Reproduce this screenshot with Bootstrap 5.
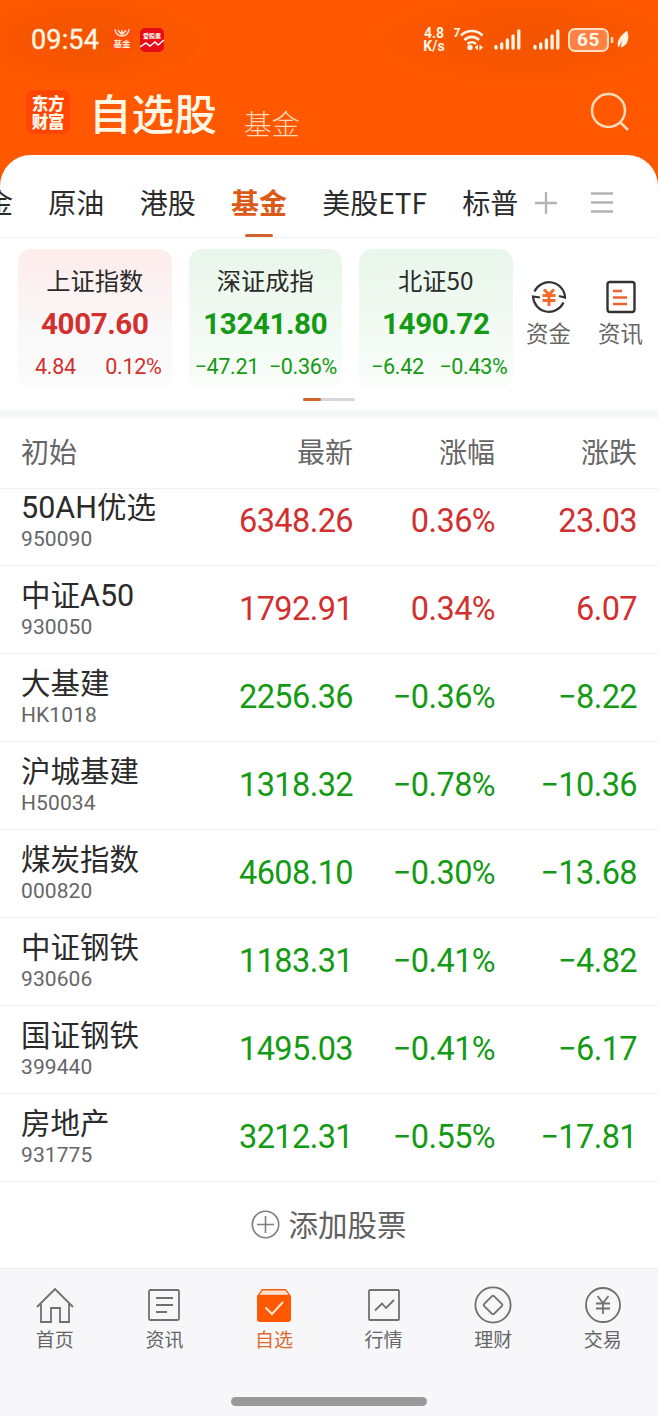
<!DOCTYPE html>
<html lang="zh-CN">
<head>
<meta charset="utf-8">
<meta name="viewport" content="width=device-width, initial-scale=1">
<title>自选股</title>
<link href="https://cdn.jsdelivr.net/npm/bootstrap@5.3.0/dist/css/bootstrap.min.css" rel="stylesheet">
<style>
:root{--cjk:"Noto Sans CJK SC",sans-serif;--num:Roboto,"Noto Sans CJK SC",sans-serif;--brand:#ff5800;--up:#d2302e;--down:#149a14}
body{font-family:var(--cjk);background:#fff;color:#2b2b2b;width:658px;height:1416px;overflow:hidden;line-height:1}
svg{display:block;flex:none}
.up{color:var(--up)}.down{color:var(--down)}
.top{background:radial-gradient(ellipse 130px 50px at 85px 40px,#0000000d,transparent),radial-gradient(ellipse 160px 50px at 525px 40px,#0000000d,transparent),var(--brand);height:186px;color:#fff6e6}
.status{height:80px;padding-left:31px;padding-right:29px}
.clock{font:400 27px/30px var(--num);letter-spacing:.15px;width:79px;-webkit-text-stroke:.4px}
.app-fund,.app-stock{width:24px;height:24px;border-radius:5px;overflow:hidden}
.app-fund{background:#ff4d0a}.app-stock{background:#e60c18}
.speed{font:700 14px/13px Roboto;width:24px}
.batt{width:41px;height:24px;border:2px solid #ffe0c4;border-radius:7px;background:#ff8145;font:700 19px/20px Roboto;letter-spacing:.6px}
.titles{height:75px;padding:0 28px 0 26px}
.logo{width:44px;height:44px;border-radius:8px;background:#ff4503;font:900 16.5px/18px var(--cjk);padding-top:4px;letter-spacing:-.2px}
.title{font-size:42.6px;font-weight:500;line-height:44px}
.subtitle{font-size:28px;font-weight:300;line-height:30px;color:#ffd9ba}
.sheet{margin-top:-31px;border-radius:31px 31px 0 0;background:#fff;position:relative}
.tabs{height:83px;border-bottom:1px solid #f0f1f3}
.tabs-in{width:530px;overflow:hidden;height:83px}
.tab{font-size:28px;line-height:32px;padding-top:31px;height:83px;margin-right:35.3px;white-space:nowrap;flex:none}
.tab:first-child{margin-left:-15px}
.tab.on{color:#dc5a18;font-weight:700}
.tab.on::after{content:"";display:block;width:28px;height:3px;border-radius:2px;background:#d3622b;margin:16px auto 0}
.indices{height:172px;padding:11px 0 0 18px}
.idx{width:153.5px;height:139px;border-radius:13px;margin-right:17px;text-align:center;flex:none}
.idx.r{background:linear-gradient(#feecec,#f9f8f9 60%,#fbfbfc)}
.idx.g{background:linear-gradient(#e9f6ea,#f9fdf9)}
.idx-name{font-size:24.3px;line-height:28px;padding-top:17px}
.idx-val{font:700 29.5px/34px Roboto;margin-top:13px;letter-spacing:-.4px}
.idx-chg{font:400 21.6px/26px Roboto;margin-top:13px;display:flex;justify-content:space-between;letter-spacing:-.35px}
.quick{font-size:22.4px;line-height:26px;color:#666;width:72px;padding-top:30px}
.quick svg{margin:0 auto 4px}
.pager{width:52px;height:3px;background:#d6d6da;border-radius:2px;margin:-12px 0 9px 303px}
.pager i{display:block;width:18px;height:3px;background:#d3622b;border-radius:2px}
.band{height:8px;background:#f6f7f9}
.cols{display:grid;grid-template-columns:182px 150px 142px 142px;padding:0 21px;align-items:center;border-bottom:1px solid #f0f0f1}
.cols>*{text-align:right}.cols>:first-child{text-align:left}
.thead-q{height:71px;font-size:28px;line-height:30px;color:#666;padding-bottom:4px}
.quote{height:88px;font:400 32.5px/38px var(--num);letter-spacing:-.6px}
.quote.first{height:77px}
.quote.first>*{margin-top:-11px}
.quote>span{padding-bottom:1px}
.nm{font:400 29.5px/34px var(--num);letter-spacing:0;color:#2b2b2b;padding-bottom:2px}
.nm b{display:block;font:400 21px/24px Roboto;color:#666;margin-top:2px;letter-spacing:.1px}
.latin{font-size:30.5px;line-height:1}
.add{height:86px;font-size:29.5px;color:#606060;padding-bottom:2px}
.bar{height:148px;background:#f7f7fa;border-top:1px solid #ebebee}
.bar-item{width:109.6px;padding-top:17px;font-size:19px;line-height:24px;color:#666;text-align:center}
.bar-item svg{margin:0 auto 3px}
.bar-item.on{color:#e06a30}
.homeline{width:196px;height:9px;border-radius:5px;background:#999;margin:46px auto 0}
</style>
</head>
<body>
<header class="top">
  <div class="status d-flex align-items-center">
    <span class="clock">09:54</span>
    <span class="app-fund"><svg width="24" height="24" viewBox="0 0 24 24"><path d="M5 1a7 7 0 0 0 14 0M8 2l3 4 1-3 1 3 3-4" fill="none" stroke="#ffe9d4" stroke-width="1.3"/><text x="12" y="19" font-size="8.5" font-weight="700" text-anchor="middle" fill="#fff0e0">基金</text></svg></span>
    <span class="app-stock" style="margin-left:6px"><svg width="24" height="24" viewBox="0 0 24 24"><text x="12" y="10" font-size="6" font-weight="900" text-anchor="middle" fill="#ffe9e0">爱股票</text><path d="M0 19l6-4 4 3 5-4 3 3 6-5" fill="none" stroke="#fff" stroke-width="1.5"/></svg></span>
    <span class="speed ms-auto text-center">4.8<br>K/s</span>
    <svg width="31" height="26" viewBox="0 0 31 26" style="margin-left:8px" fill="none" stroke="#fff3e2" stroke-width="2.6"><text x="-1" y="10" font-family="Roboto" font-size="13" font-weight="700" fill="#fff3e2" stroke="none">7</text><path d="M7 8.500a15 15 0 0 1 21.500 0M10.500 13a10 10 0 0 1 14.500 0M13.500 17a6 6 0 0 1 8.500 0"/><circle cx="16" cy="20.500" r="2.700" fill="#fff3e2" stroke="none"/><path d="M24 17.500v6l-3.500-3zM25.500 17.500v6l3.500-3z" fill="#fff3e2" stroke="none"/></svg>
    <svg width="27" height="22" viewBox="0 0 27 22" style="margin-left:9px" stroke="#fff3e2" stroke-width="3.300" stroke-linecap="round"><path d="M2 17.500v1.500M7.700 15v4M13.400 11v8M19.100 7v12M24.800 2v17"/></svg>
    <svg width="27" height="22" viewBox="0 0 27 22" style="margin-left:12px" stroke="#fff3e2" stroke-width="3.300" stroke-linecap="round"><path d="M2 17.500v1.500M7.700 15v4M13.400 11v8M19.100 7v12M24.800 2v17"/></svg>
    <span class="batt text-center" style="margin-left:8px">65</span>
    <svg width="20" height="20" viewBox="0 0 20 20"><path d="M3 7v6" stroke="#ffe0c4" stroke-width="2.500"/><path d="M18 1c3 9-1 15-6 16l2-8-4.500 8c-2-6 2-11 8.500-16z" fill="#fff3e2" stroke="#fff3e2" stroke-width=".6"/></svg>
  </div>
  <div class="titles d-flex">
    <div class="logo text-center" style="margin-top:10px">东方<br>财富</div>
    <div class="title" style="margin:10px 0 0 19px">自选股</div>
    <div class="subtitle" style="margin:28px 0 0 27px">基金</div>
    <svg class="ms-auto" style="margin-top:12px" width="40" height="40" viewBox="0 0 40 40" fill="none" stroke="#ffdcbc" stroke-width="2.500"><circle cx="18.500" cy="18.500" r="16.500"/><path d="M30 30l8 8"/></svg>
  </div>
</header>
<main class="sheet">
  <nav class="tabs d-flex">
    <div class="tabs-in d-flex">
      <span class="tab">金</span><span class="tab">原油</span><span class="tab">港股</span><span class="tab on">基金</span><span class="tab">美股ETF</span><span class="tab">标普</span>
    </div>
    <svg style="margin:36px 0 0 4px" width="24" height="24" viewBox="0 0 24 24" stroke="#b3b3b3" stroke-width="2.300"><path d="M12 1v22M1 12h22"/></svg>
    <svg style="margin:36px 0 0 33px" width="22" height="24" viewBox="0 0 22 24" stroke="#b3b3b3" stroke-width="2.300"><path d="M0 2.500h22M0 11.500h22M0 20.500h22"/></svg>
  </nav>
  <section class="indices d-flex">
    <div class="idx r"><div class="idx-name">上证指数</div><div class="idx-val up">4007.60</div><div class="idx-chg up" style="padding:0 10px 0 17px"><span>4.84</span><span>0.12%</span></div></div>
    <div class="idx g"><div class="idx-name">深证成指</div><div class="idx-val down">13241.80</div><div class="idx-chg down" style="padding:0 5px 0 6px"><span>−47.21</span><span>−0.36%</span></div></div>
    <div class="idx g"><div class="idx-name">北证50</div><div class="idx-val down">1490.72</div><div class="idx-chg down" style="padding:0 5px 0 12px"><span>−6.42</span><span>−0.43%</span></div></div>
    <div class="quick text-center" style="margin-left:-17px">
      <svg width="36" height="36" viewBox="0 0 36 36" fill="none" stroke="#333" stroke-width="2.200"><path d="M3.500 12.500A16 16 0 0 1 34 18.500l-6-1.500M32.500 23.500A16 16 0 0 1 2 17.500l7 1"/><path d="M13 10.500l5 5 5-5M11.500 16.500h13M11.500 21.500h13M18 15v12" stroke="#f4692c" stroke-width="3"/></svg>资金</div>
    <div class="quick text-center">
      <svg width="36" height="36" viewBox="0 0 36 36" fill="none" stroke="#333" stroke-width="2.400"><rect x="4.500" y="3" width="27" height="30" rx="2.500"/><path d="M10 12h9M10 18.500h14M10 25h14" stroke="#e8662e" stroke-width="2.600"/></svg>资讯</div>
  </section>
  <div class="pager"><i></i></div>
  <div class="band"></div>
  <section>
    <div class="cols thead-q"><span>初始</span><span>最新</span><span>涨幅</span><span>涨跌</span></div>
    <div class="cols quote first up"><div class="nm"><span class="latin">50AH</span>优选<b>950090</b></div><span>6348.26</span><span>0.36%</span><span>23.03</span></div>
    <div class="cols quote up"><div class="nm">中证<span class="latin">A50</span><b>930050</b></div><span>1792.91</span><span>0.34%</span><span>6.07</span></div>
    <div class="cols quote down"><div class="nm">大基建<b>HK1018</b></div><span>2256.36</span><span>−0.36%</span><span>−8.22</span></div>
    <div class="cols quote down"><div class="nm">沪城基建<b>H50034</b></div><span>1318.32</span><span>−0.78%</span><span>−10.36</span></div>
    <div class="cols quote down"><div class="nm">煤炭指数<b>000820</b></div><span>4608.10</span><span>−0.30%</span><span>−13.68</span></div>
    <div class="cols quote down"><div class="nm">中证钢铁<b>930606</b></div><span>1183.31</span><span>−0.41%</span><span>−4.82</span></div>
    <div class="cols quote down"><div class="nm">国证钢铁<b>399440</b></div><span>1495.03</span><span>−0.41%</span><span>−6.17</span></div>
    <div class="cols quote down"><div class="nm">房地产<b>931775</b></div><span>3212.31</span><span>−0.55%</span><span>−17.81</span></div>
  </section>
  <div class="add d-flex align-items-center justify-content-center">
    <svg class="me-2" width="29" height="29" viewBox="0 0 29 29" fill="none" stroke="#808080" stroke-width="1.600"><circle cx="14.500" cy="14.500" r="13.200"/><path d="M14.500 6v17M6 14.500h17"/></svg>添加股票
  </div>
</main>
<footer class="bar">
  <div class="d-flex">
    <div class="bar-item"><svg width="38" height="38" viewBox="0 0 38 38" fill="none" stroke="#707070" stroke-width="1.800"><path d="M1 21L19 3l18 18M5 18v18h10V22h9v14h9V18"/></svg>首页</div>
    <div class="bar-item"><svg width="38" height="38" viewBox="0 0 38 38" fill="none" stroke="#707070" stroke-width="1.800"><rect x="4" y="4" width="30" height="30" rx="1.500"/><path d="M11 12h17M11 19h17M11 26h11"/></svg>资讯</div>
    <div class="bar-item on"><svg width="38" height="38" viewBox="0 0 38 38"><path d="M7 3h24l5 7v23a3 3 0 0 1-3 3H5a3 3 0 0 1-3-3V10z" fill="#ff5800"/><path d="M7.500 4.500h23l3 4.200h-29z" fill="#ffe3d0"/><path d="M10.500 21.500l6.500 6.500 11-12" fill="none" stroke="#ffe6cf" stroke-width="2"/></svg>自选</div>
    <div class="bar-item"><svg width="38" height="38" viewBox="0 0 38 38" fill="none" stroke="#707070" stroke-width="1.800"><rect x="4" y="4" width="30" height="30" rx="1"/><path d="M10 24.500l7-7 4 4.500 8-8"/></svg>行情</div>
    <div class="bar-item"><svg width="38" height="38" viewBox="0 0 38 38" fill="none" stroke="#707070" stroke-width="1.800"><circle cx="19" cy="19" r="17.600"/><path d="M18 10.200q1-1 2 0l8 8q.8.800 0 1.600l-8 8q-1 1-2 0l-8-8q-.8-.800 0-1.600z"/></svg>理财</div>
    <div class="bar-item"><svg width="38" height="38" viewBox="0 0 38 38" fill="none" stroke="#707070" stroke-width="1.800"><circle cx="19" cy="19" r="17"/><path d="M13.500 10l5.500 7 5.500-7M12 17.500h14M12 22.500h14M19 17v11"/></svg>交易</div>
  </div>
  <div class="homeline"></div>
</footer>
<script src="https://cdn.jsdelivr.net/npm/bootstrap@5.3.0/dist/js/bootstrap.bundle.min.js"></script>
</body>
</html>
